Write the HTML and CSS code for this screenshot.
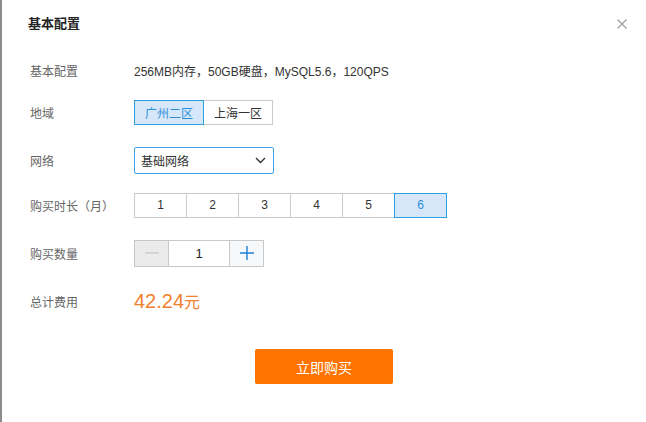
FILE: index.html
```html
<!DOCTYPE html>
<html>
  <head>
    <meta charset="UTF-8" />
    <title>基本配置</title>
    <link rel="stylesheet" href="styles.css">
  </head>
  <body>
    <div class="dialog">
      <div class="dialog_head">
        <span class="dialog_title">基本配置</span>
        <span class="dialog_close">
          <svg width="10" height="10" viewBox="0 0 10 10">
            <path d="M0.5 0.5 L9.5 9.5 M9.5 0.5 L0.5 9.5" stroke="#a0a0a0" stroke-width="1.3" fill="none" />
          </svg>
        </span>
      </div>

      <div class="row row_short">
        <div class="label">基本配置</div>
        <div class="value">256MB内存，50GB硬盘，MySQL5.6，120QPS</div>
      </div>

      <div class="row">
        <div class="label">地域</div>
        <div class="choice">
          <span class="opt opt_region selected">广州二区</span>
          <span class="opt opt_region">上海一区</span>
        </div>
      </div>

      <div class="row row_mid">
        <div class="label">网络</div>
        <div class="select">
          <span>基础网络</span>
          <svg width="11" height="7" viewBox="0 0 11 7">
            <path d="M1 1 L5.5 5.5 L10 1" stroke="#333" stroke-width="1.4" fill="none" />
          </svg>
        </div>
      </div>

      <div class="row">
        <div class="label">购买时长（月）</div>
        <div class="choice">
          <span class="opt opt_month">1</span>
          <span class="opt opt_month">2</span>
          <span class="opt opt_month">3</span>
          <span class="opt opt_month">4</span>
          <span class="opt opt_month">5</span>
          <span class="opt opt_month selected">6</span>
        </div>
      </div>

      <div class="row">
        <div class="label">购买数量</div>
        <div class="counter">
          <span class="step step_minus">
            <svg width="14" height="2" viewBox="0 0 14 2"><path d="M0 1 H14" stroke="#bdbdbd" stroke-width="1" /></svg>
          </span>
          <span class="count">1</span>
          <span class="step step_plus">
            <svg width="14" height="14" viewBox="0 0 14 14"><path d="M0 7 H14 M7 0 V14" stroke="#1e7fd6" stroke-width="1.4" /></svg>
          </span>
        </div>
      </div>

      <div class="row">
        <div class="label">总计费用</div>
        <div class="price">42.24<span class="unit">元</span></div>
      </div>

      <div class="dialog_foot">
        <button class="buy_button">立即购买</button>
      </div>
    </div>
  </body>
</html>
```

FILE: styles.css
```css
body {
  margin: 0;
  background-color: #fff;
  font-family: "Liberation Sans", "Noto Sans CJK SC", sans-serif;
  font-size: 12px;
  color: #333;
}

.dialog {
  height: 422px;
  border-left: 2px solid #8c8c8c;
  box-sizing: border-box;
}

/* Header */
.dialog_head {
  height: 56px;
  padding: 16px 19px 0 26px;
  box-sizing: border-box;
  display: flex;
  justify-content: space-between;
  align-items: flex-start;
}
.dialog_title {
  font-size: 13px;
  font-weight: bold;
  line-height: 16px;
  color: #222;
}
.dialog_close {
  display: flex;
  margin-top: 3px;
}

/* Form rows */
.row {
  display: flex;
  align-items: center;
  height: 28px;
  margin-bottom: 20px;
  padding-left: 28px;
}
.row_short {
  margin-bottom: 14px;
}
.row_mid {
  margin-bottom: 17px;
}
.label {
  width: 104px;
  color: #666;
}
.value {
  color: #333;
}

.choice {
  display: flex;
}
.opt {
  height: 25px;
  box-sizing: border-box;
  border: 1px solid #ccc;
  margin-left: -1px;
  display: flex;
  align-items: center;
  justify-content: center;
  background-color: #fff;
  color: #333;
}
.opt:first-child {
  margin-left: 0;
}
.opt_region {
  width: 70px;
}
.opt_month {
  width: 53px;
}
.opt.selected {
  background-color: #d5e7f9;
  border-color: #2e9ee2;
  color: #2b8fd8;
  position: relative;
}

.select {
  width: 140px;
  height: 27px;
  box-sizing: border-box;
  border: 1px solid #3aa3e3;
  border-radius: 2px;
  padding: 0 7px 0 6px;
  display: flex;
  align-items: center;
  justify-content: space-between;
  color: #333;
}

.counter {
  display: flex;
  height: 27px;
  border: 1px solid #c8c8c8;
  box-sizing: border-box;
}
.step {
  display: flex;
  align-items: center;
  justify-content: center;
}
.step_minus {
  width: 33px;
  background-color: #ebebeb;
  border-right: 1px solid #c8c8c8;
}
.step_plus {
  width: 33px;
  background-color: #f7f8f9;
  border-left: 1px solid #c8c8c8;
}
.count {
  width: 60px;
  display: flex;
  align-items: center;
  justify-content: center;
  font-size: 13px;
  color: #222;
}

.price {
  font-size: 20px;
  color: #f2802d;
}
.price .unit {
  font-size: 16px;
}

/* Footer */
.dialog_foot {
  display: flex;
  justify-content: center;
  padding-top: 14px;
}
.buy_button {
  width: 138px;
  height: 35px;
  border: none;
  border-radius: 2px;
  background-color: #ff7300;
  color: #fff;
  font-family: "Noto Sans CJK SC", sans-serif;
  font-size: 14px;
}
```
